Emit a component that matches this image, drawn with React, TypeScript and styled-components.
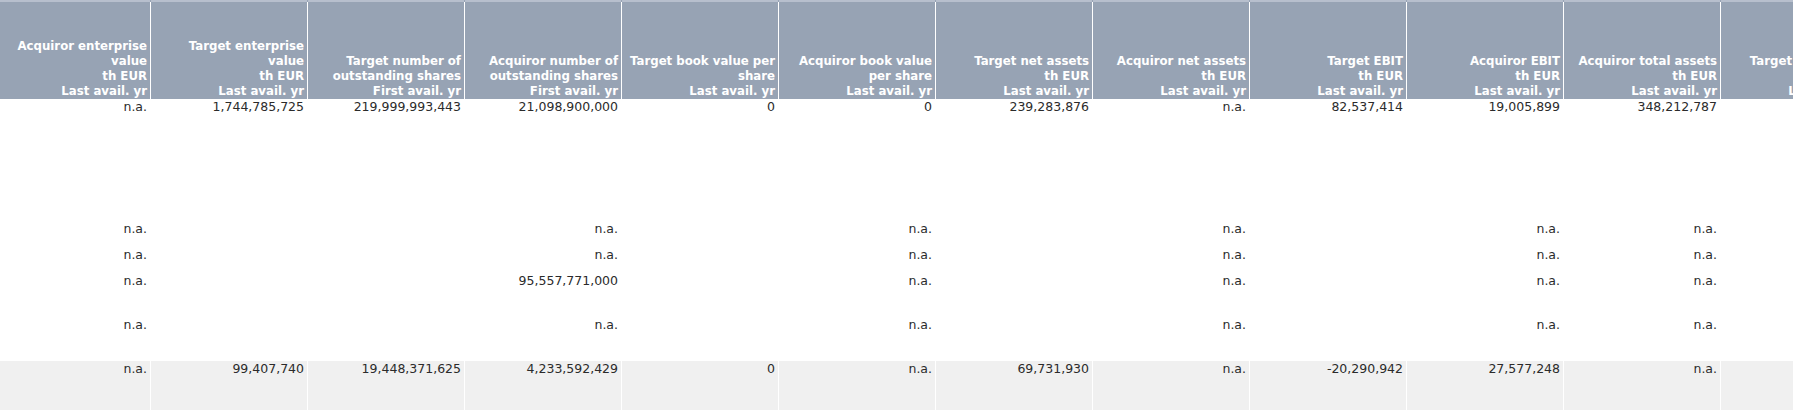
import React from 'react';
import styled, { createGlobalStyle } from 'styled-components';

const GlobalStyle = createGlobalStyle`
  html, body {
    margin: 0;
    padding: 0;
    background: #ffffff;
    overflow: hidden;
  }
  body {
    font-family: "DejaVu Sans", Verdana, sans-serif;
  }
`;

const COLS = '150px repeat(12, 156px)';

const Grid = styled.div`
  display: flex;
  flex-direction: column;
  width: max-content;
`;

const StripRow = styled.div`
  display: grid;
  grid-template-columns: ${COLS};
  column-gap: 1px;
  height: 2px;
  background: #97a3b4;
`;

const StripCell = styled.div`
  background: #b7bfcd;
`;

const HeaderRow = styled.div`
  display: grid;
  grid-template-columns: ${COLS};
  column-gap: 1px;
  height: 97px;
`;

const HeaderCell = styled.div`
  background: #97a3b4;
  color: #ffffff;
  font-weight: bold;
  font-size: 11.75px;
  line-height: 15px;
  text-align: right;
  padding: 0 3px 0 0;
  display: flex;
  flex-direction: column;
  justify-content: flex-end;
  white-space: nowrap;
  overflow: hidden;
`;

const DataRow = styled.div<{ h: number }>`
  display: grid;
  grid-template-columns: ${COLS};
  column-gap: 1px;
  height: ${({ h }) => h}px;
`;

const DataCell = styled.div<{ shaded?: boolean }>`
  background: ${({ shaded }) => (shaded ? '#f0f0f0' : '#ffffff')};
  color: #2b2b2b;
  font-size: 12.5px;
  line-height: 15px;
  text-align: right;
  padding: 0 3px 0 0;
  white-space: nowrap;
  overflow: hidden;
`;

const headers: string[][] = [
  ['Acquiror enterprise', 'value', 'th EUR', 'Last avail. yr'],
  ['Target enterprise', 'value', 'th EUR', 'Last avail. yr'],
  ['Target number of', 'outstanding shares', 'First avail. yr'],
  ['Acquiror number of', 'outstanding shares', 'First avail. yr'],
  ['Target book value per', 'share', 'Last avail. yr'],
  ['Acquiror book value', 'per share', 'Last avail. yr'],
  ['Target net assets', 'th EUR', 'Last avail. yr'],
  ['Acquiror net assets', 'th EUR', 'Last avail. yr'],
  ['Target EBIT', 'th EUR', 'Last avail. yr'],
  ['Acquiror EBIT', 'th EUR', 'Last avail. yr'],
  ['Acquiror total assets', 'th EUR', 'Last avail. yr'],
  ['Target total assets', 'th EUR', 'Last avail. yr'],
  ['Acquiror total assets', 'th EUR', 'First avail. yr'],
];

const NA = 'n.a.';
const sparse = [NA, '', '', NA, '', NA, '', NA, '', NA, NA, '', ''];

const rows: { h: number; shaded?: boolean; cells: string[] }[] = [
  {
    h: 122,
    cells: [NA, '1,744,785,725', '219,999,993,443', '21,098,900,000', '0', '0', '239,283,876', NA, '82,537,414', '19,005,899', '348,212,787', '', ''],
  },
  { h: 26, cells: sparse },
  { h: 26, cells: sparse },
  { h: 44, cells: [NA, '', '', '95,557,771,000', '', NA, '', NA, '', NA, NA, '', ''] },
  { h: 44, cells: sparse },
  {
    h: 60,
    shaded: true,
    cells: [NA, '99,407,740', '19,448,371,625', '4,233,592,429', '0', NA, '69,731,930', NA, '-20,290,942', '27,577,248', NA, '', ''],
  },
];

const App: React.FC = () => {
  return (
    <>
      <GlobalStyle />
      <Grid>
        <StripRow>
          {headers.map((_, i) => (
            <StripCell key={i} />
          ))}
        </StripRow>
        <HeaderRow>
          {headers.map((lines, i) => (
            <HeaderCell key={i}>
              {lines.map((l, j) => (
                <span key={j}>{l}</span>
              ))}
            </HeaderCell>
          ))}
        </HeaderRow>
        {rows.map((r, i) => (
          <DataRow key={i} h={r.h}>
            {r.cells.map((c, j) => (
              <DataCell key={j} shaded={r.shaded}>
                {c}
              </DataCell>
            ))}
          </DataRow>
        ))}
      </Grid>
    </>
  );
};

export default App;
